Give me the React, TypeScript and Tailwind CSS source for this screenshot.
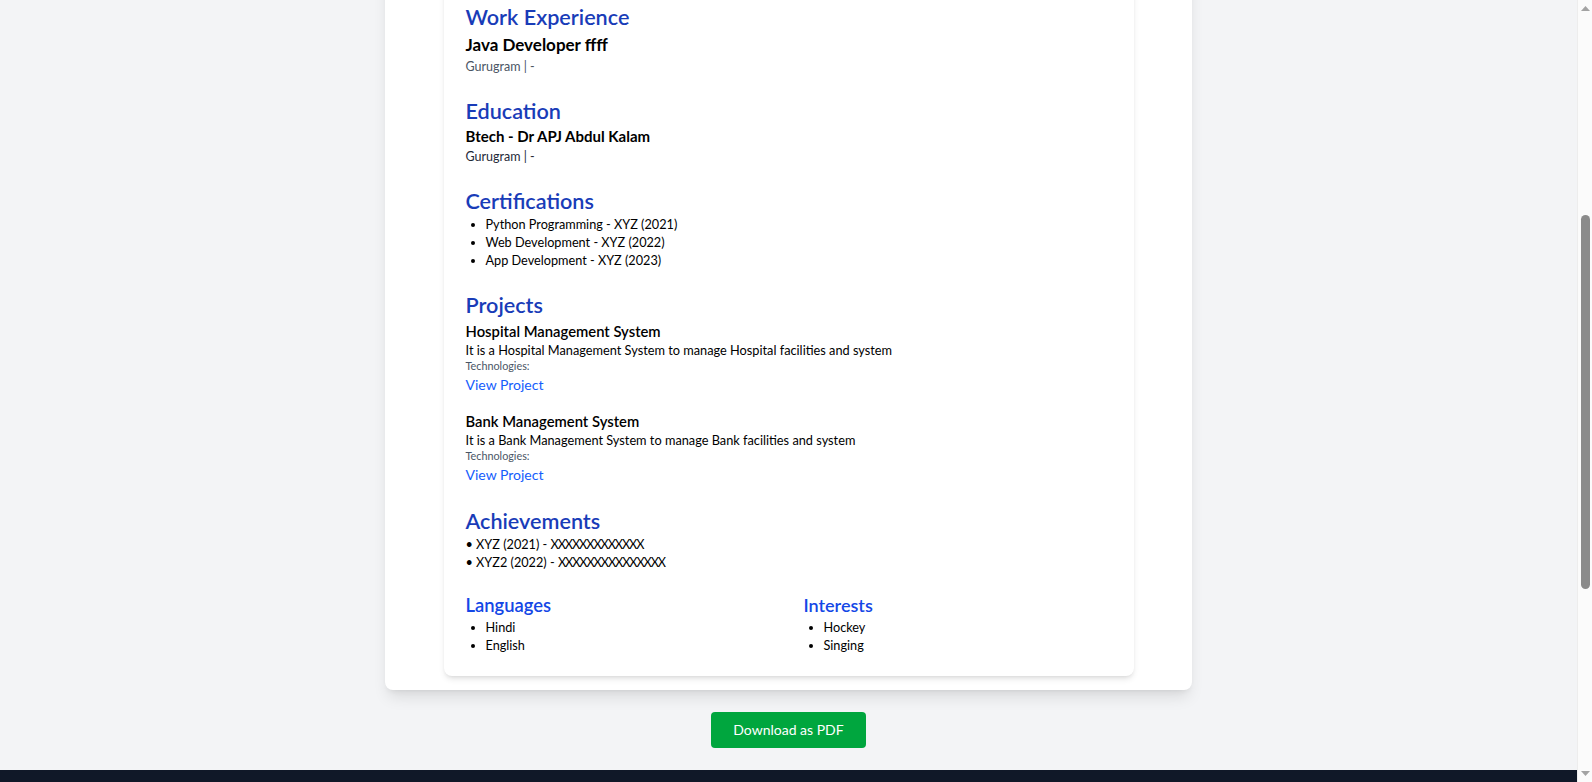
import { useLayoutEffect, useRef } from 'react';

const certifications = [
  'Python Programming - XYZ (2021)',
  'Web Development - XYZ (2022)',
  'App Development - XYZ (2023)',
];

const projects = [
  {
    title: 'Hospital Management System',
    description: 'It is a Hospital Management System to manage Hospital facilities and system',
  },
  {
    title: 'Bank Management System',
    description: 'It is a Bank Management System to manage Bank facilities and system',
  },
];

const achievements = [
  { head: 'XYZ (2021) - ', body: 'XXXXXXXXXXXXX' },
  { head: 'XYZ2 (2022) - ', body: 'XXXXXXXXXXXXXXX' },
];

function ScrollBar() {
  // window scrollbar as it shows in the screenshot
  return (
    <div className="fixed top-0 right-0 h-screen w-[15px] bg-[#fbfbfb] border-l border-[#ededed] flex flex-col items-center">
      <svg width="9" height="5" viewBox="0 0 9 5" className="mt-[6px] shrink-0">
        <path d="M0 5 L4.5 0 L9 5 Z" fill="#a3a3a3" />
      </svg>
      <div className="mt-[204px] h-[374px] w-[9px] rounded-full bg-[#8b8b8b] shrink-0" />
      <div className="flex-1" />
      <svg width="9" height="5" viewBox="0 0 9 5" className="mb-[6px] shrink-0">
        <path d="M0 0 L4.5 5 L9 0 Z" fill="#a3a3a3" />
      </svg>
    </div>
  );
}

export default function App() {
  const workRef = useRef<HTMLElement>(null);

  // the preview is shown scrolled down to the experience part
  useLayoutEffect(() => {
    const el = workRef.current;
    if (!el) return;
    const top = el.getBoundingClientRect().top + window.scrollY;
    window.scrollTo(0, Math.round(top - 3));
  }, []);

  return (
    <div className="min-h-screen bg-gray-100 pr-[15px] font-['Lato',sans-serif] text-gray-900">
      <nav className="h-16 bg-white shadow-sm flex items-center justify-between px-10">
        <span className="text-xl font-bold text-blue-800">ResumeBuilder</span>
        <div className="flex gap-6 text-sm text-gray-700">
          <span>Home</span>
          <span>Templates</span>
          <span>My Resumes</span>
        </div>
      </nav>

      <main className="pt-8">
        <div className="w-[807px] mx-auto bg-white rounded-lg shadow-lg pt-6 pb-[14px]">
          <div className="w-[690px] mx-auto bg-white rounded-lg shadow-md p-[22px]">
            {/* Header */}
            <div className="mb-[22px]">
              <h1 className="text-3xl font-bold text-blue-900 leading-9">Rahul Sharma</h1>
              <p className="text-[12.75px] leading-5 text-gray-600">rahul@example.com | +91 9876543210 | Gurugram</p>
            </div>

            <section className="mb-[22px]">
              <h2 className="text-[21.6px] leading-7 font-semibold text-blue-800">Summary</h2>
              <p className="text-[12.75px] leading-5 mt-0.5">
                Motivated developer with experience in building web applications and backend services.
                Looking for opportunities to grow and work on challenging projects.
              </p>
            </section>

            <section className="mb-[22px]">
              <h2 className="text-[21.6px] leading-7 font-semibold text-blue-800">Skills</h2>
              <p className="text-[12.75px] leading-5 mt-0.5">Java, Spring Boot, React, SQL</p>
            </section>

            {/* Work Experience */}
            <section ref={workRef} className="mb-[21px]">
              <h2 className="text-[21.6px] leading-7 font-semibold text-blue-800">Work Experience</h2>
              <h3 className="mt-0.5 text-[17px] leading-6 font-bold text-black">Java Developer ffff</h3>
              <p className="mt-px text-[12.5px] leading-[18px] text-gray-600">Gurugram | -</p>
            </section>

            {/* Education */}
            <section className="mb-[21px]">
              <h2 className="text-[21.6px] leading-7 font-semibold text-blue-800">Education</h2>
              <h3 className="mt-0.5 text-[15px] leading-[18px] font-bold text-black">Btech - Dr APJ Abdul Kalam</h3>
              <p className="mt-[3px] text-[12.5px] leading-[18px] text-gray-800">Gurugram | -</p>
            </section>

            {/* Certifications */}
            <section className="mb-[22px]">
              <h2 className="text-[21.6px] leading-7 font-semibold text-blue-800">Certifications</h2>
              <ul className="list-disc pl-5 text-[12.7px] leading-[18px] text-black">
                {certifications.map((c) => (
                  <li key={c}>{c}</li>
                ))}
              </ul>
            </section>

            {/* Projects */}
            <section className="mb-[22px]">
              <h2 className="text-[21.6px] leading-7 font-semibold text-blue-800">Projects</h2>
              <div className="space-y-4">
                {projects.map((p) => (
                  <div key={p.title}>
                    <h3 className="mt-0.5 text-[14.8px] leading-5 font-semibold text-black">{p.title}</h3>
                    <p className="text-[12.75px] leading-[18px] text-black">{p.description}</p>
                    <p className="text-[10.8px] leading-[14px] text-gray-600">Technologies:</p>
                    <a href="#" className="block mt-0.5 text-sm leading-5 text-blue-600">
                      View Project
                    </a>
                  </div>
                ))}
              </div>
            </section>

            {/* Achievements */}
            <section className="mb-[22px]">
              <h2 className="text-[21.6px] leading-7 font-semibold text-blue-800">Achievements</h2>
              {achievements.map((a) => (
                <p key={a.head} className="text-[12.7px] leading-[18px] text-black">
                  • {a.head}
                  <span className="tracking-[-1.1px]">{a.body}</span>
                </p>
              ))}
            </section>

            {/* Languages / Interests */}
            <div className="grid grid-cols-2 gap-[30px]">
              <div>
                <h3 className="text-[18.4px] leading-[25px] font-semibold text-blue-700">Languages</h3>
                <ul className="list-disc pl-5 text-[12.7px] leading-[18px] text-black">
                  <li>Hindi</li>
                  <li>English</li>
                </ul>
              </div>
              <div>
                <h3 className="text-lg leading-[25px] font-semibold text-blue-700">Interests</h3>
                <ul className="list-disc pl-5 text-[12.7px] leading-[18px] text-black">
                  <li>Hockey</li>
                  <li>Singing</li>
                </ul>
              </div>
            </div>
          </div>
        </div>

        <div className="flex justify-center pt-[22px] pb-[22px]">
          <button className="h-9 px-[22px] rounded bg-green-600 text-white text-sm">
            Download as PDF
          </button>
        </div>
      </main>

      <footer className="h-[380px] bg-gray-900 text-gray-300 px-10 pt-12">
        <div className="w-[1100px] mx-auto grid grid-cols-3 gap-10 text-sm">
          <div>
            <p className="text-lg font-semibold text-white mb-3">ResumeBuilder</p>
            <p>Create professional resumes in minutes.</p>
          </div>
          <div className="space-y-2">
            <p className="text-lg font-semibold text-white mb-3">Links</p>
            <p>Home</p>
            <p>Templates</p>
            <p>Contact</p>
          </div>
          <div className="space-y-2">
            <p className="text-lg font-semibold text-white mb-3">Contact</p>
            <p>support@resumebuilder.com</p>
          </div>
        </div>
        <p className="mt-16 text-center text-xs text-gray-500">© 2024 ResumeBuilder. All rights reserved.</p>
      </footer>

      <ScrollBar />
    </div>
  );
}
